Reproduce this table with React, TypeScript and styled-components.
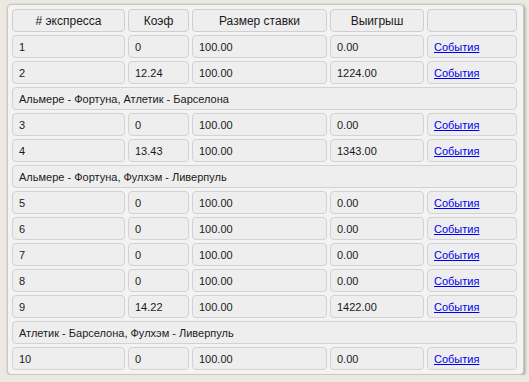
import { createGlobalStyle, styled } from 'styled-components';

const GlobalStyle = createGlobalStyle`
  html, body {
    margin: 0;
    padding: 0;
  }
  body {
    background: #ebe9e1;
    font-family: "Liberation Sans", Arial, sans-serif;
    font-size: 11px;
    color: #1a1a1a;
  }
`;

const Page = styled.div`
  padding: 4px 0 0 7px;
`;

const Panel = styled.div`
  width: 513px;
  padding: 1px;
  border: 1px solid #c9c9c4;
  border-radius: 4px;
  background: #f3f3f3;
  box-shadow: 1px 1px 3px rgba(0, 0, 0, 0.35);
`;

const Table = styled.table`
  width: 511px;
  table-layout: fixed;
  border-collapse: separate;
  border-spacing: 3px;
`;

const HeadCell = styled.th<{ $w: number }>`
  box-sizing: border-box;
  width: ${(p) => p.$w}px;
  height: 23px;
  padding: 0 6px;
  border: 1px solid #cfcfcf;
  border-radius: 4px;
  background: #eeeeee;
  font-size: 12px;
  font-weight: normal;
  text-align: center;
`;

const Cell = styled.td`
  box-sizing: border-box;
  height: 23px;
  padding: 0 6px;
  border: 1px solid #d2d2d2;
  border-radius: 4px;
  background: #eeeeee;
  font-size: 11px;
  white-space: nowrap;
`;

const EventsLink = styled.a`
  color: #0000ee;
  text-decoration: underline;
  cursor: pointer;
`;

type Bet = { n: number; k: string; win: string };

const columns = [
  { title: '# экспресса', w: 113 },
  { title: 'Коэф', w: 61 },
  { title: 'Размер ставки', w: 135 },
  { title: 'Выигрыш', w: 94 },
  { title: '', w: 90 },
];

const rows: (Bet | string)[] = [
  { n: 1, k: '0', win: '0.00' },
  { n: 2, k: '12.24', win: '1224.00' },
  'Альмере - Фортуна, Атлетик - Барселона',
  { n: 3, k: '0', win: '0.00' },
  { n: 4, k: '13.43', win: '1343.00' },
  'Альмере - Фортуна, Фулхэм - Ливерпуль',
  { n: 5, k: '0', win: '0.00' },
  { n: 6, k: '0', win: '0.00' },
  { n: 7, k: '0', win: '0.00' },
  { n: 8, k: '0', win: '0.00' },
  { n: 9, k: '14.22', win: '1422.00' },
  'Атлетик - Барселона, Фулхэм - Ливерпуль',
  { n: 10, k: '0', win: '0.00' },
];

export default function App() {
  return (
    <Page>
      <GlobalStyle />
      <Panel>
        <Table>
          <thead>
            <tr>
              {columns.map((c, i) => (
                <HeadCell key={i} $w={c.w}>
                  {c.title}
                </HeadCell>
              ))}
            </tr>
          </thead>
          <tbody>
            {rows.map((r, i) =>
              typeof r === 'string' ? (
                <tr key={i}>
                  <Cell colSpan={5}>{r}</Cell>
                </tr>
              ) : (
                <tr key={i}>
                  <Cell>{r.n}</Cell>
                  <Cell>{r.k}</Cell>
                  <Cell>100.00</Cell>
                  <Cell>{r.win}</Cell>
                  <Cell>
                    <EventsLink href="#">События</EventsLink>
                  </Cell>
                </tr>
              ),
            )}
          </tbody>
        </Table>
      </Panel>
    </Page>
  );
}
